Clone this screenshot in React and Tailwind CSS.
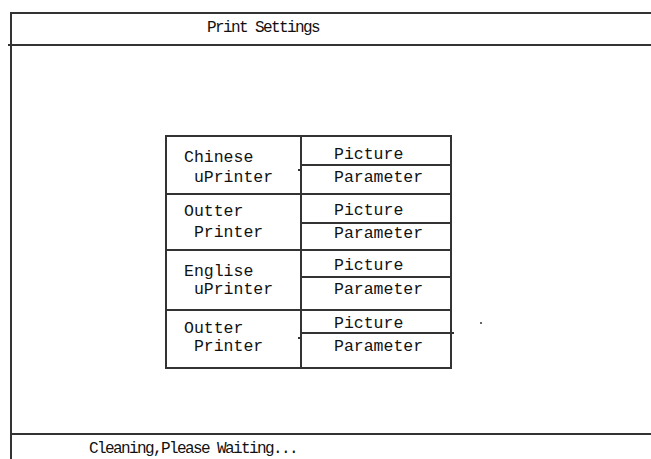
import React from "react";

const blocks = [
  { a: "Chinese", b: " uPrinter", h: 58, top: 29, lp: 11, gap: 0, pp: 8, qp: 2 },
  { a: "Outter", b: " Printer", h: 56, top: 29, lp: 7, gap: 1, pp: 6, qp: 0 },
  { a: "Englise", b: " uPrinter", h: 60, top: 27, lp: 11, gap: -2, pp: 5, qp: 2 },
  { a: "Outter", b: " Printer", h: 56, top: 23, lp: 8, gap: -2, pp: 3, qp: 3, ext: true },
];

export default function App() {
  const mono = { fontFamily: '"Liberation Mono", "DejaVu Sans Mono", monospace' };
  return (
    <div className="relative w-[651px] h-[459px] overflow-hidden bg-white text-[#111]" style={mono}>
      <div className="ml-[10px] mt-[12px] flex h-[447px] flex-col border-l-2 border-t-2 border-[#333]">
        <div className="relative h-[32px] shrink-0 border-b-2 border-[#333] pl-[195px] pt-[4px] text-[16px] leading-[20px] tracking-[-1.6px] whitespace-pre">
          Print Settings
          <span className="absolute left-[-4px] bottom-[-2px] h-[2px] w-[4px] bg-[#333]" />
        </div>
        <div className="h-[387px] shrink-0 pl-[153px] pt-[89px]">
          <div className="flex w-[287px] flex-col border-2 border-[#333] text-[16.5px] leading-[20px]">
            {blocks.map((bl, i) => (
              <div
                key={i}
                className={"flex " + (i < blocks.length - 1 ? "border-b-2 border-[#333]" : "")}
                style={{ height: bl.h }}
              >
                <div className="relative w-[135px] shrink-0 border-r-2 border-[#333] pl-[17px] whitespace-pre" style={{ paddingTop: bl.lp }}>
                  <div>{bl.a}</div>
                  <div style={{ marginTop: bl.gap }}>{bl.b}</div>
                  {(i === 0 || i === 3) && (
                    <span className="absolute right-[-2px] h-[2px] w-[4px] bg-[#333]" style={{ top: bl.top + 3 }} />
                  )}
                </div>
                <div className="flex flex-1 flex-col">
                  <div className="relative shrink-0 border-b-2 border-[#333] pl-[32px] whitespace-pre" style={{ height: bl.top, paddingTop: bl.pp }}>
                    Picture
                    {bl.ext && <span className="absolute right-[-4px] bottom-[-2px] h-[2px] w-[4px] bg-[#333]" />}
                  </div>
                  <div className="flex-1 pl-[32px] whitespace-pre" style={{ paddingTop: bl.qp }}>
                    Parameter
                  </div>
                </div>
              </div>
            ))}
          </div>
        </div>
        <div className="flex-1 border-t-2 border-[#333] pl-[77px] pt-[4px] text-[16px] leading-[20px] tracking-[-1.6px] whitespace-pre">
          Cleaning,Please Waiting...
        </div>
      </div>
      <span className="absolute left-[480px] top-[322px] h-[2px] w-[2px] bg-[#666]" />
    </div>
  );
}
